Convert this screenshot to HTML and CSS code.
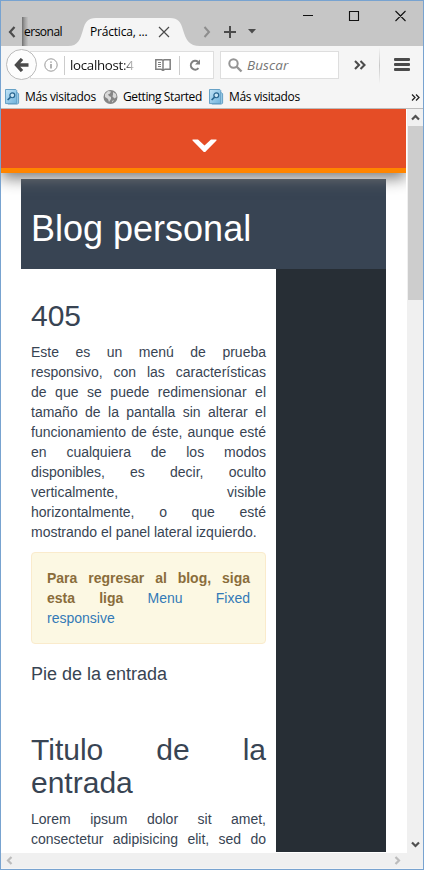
FILE: index.html
```html
<!DOCTYPE html>
<html lang="es">
<head>
<meta charset="utf-8">
<title>Práctica</title>
<link rel="stylesheet" href="styles.css">
</head>
<body>
<svg width="0" height="0" class="defs">
  <defs>
    <linearGradient id="blue" x1="0" y1="0" x2="1" y2="1"><stop offset="0" stop-color="#c4e5f7"/><stop offset="1" stop-color="#6fb2dc"/></linearGradient>
    <symbol id="folder" viewBox="0 0 16 17">
      <path d="M11 4h2.500l1 1v10l-1 1H3" fill="#a5d3ee" stroke="#5f9cc2"/>
      <path d="M.5 .5h11l1 1v14H.5z" fill="url(#blue)" stroke="#5f9cc2"/>
      <circle cx="7.800" cy="6.700" r="2.600" fill="#c9e6f6" stroke="#28658f" stroke-width="1.300"/>
      <path d="M6 8.600l-3.200 3.100" stroke="#28658f" stroke-width="1.700"/>
    </symbol>
  </defs>
</svg>
<div class="window">
  <div class="tabstrip">
    <svg class="tab-prev" width="8" height="12" viewBox="0 0 8 12"><path d="M6.500 1L2 6l4.500 5" fill="none" stroke="#4b4b4b" stroke-width="2.200"/></svg>
    <div class="tab-edge"></div>
    <div class="tab-old">ersonal</div>
    <div class="tab-active">
      <svg class="tab-shape" width="132" height="28" viewBox="0 0 132 28"><path d="M0 28C10 28 12 22 15 12C17 4 20 0 28 0H102C110 0 113 4 115 12C118 22 121 28 132 28z" fill="#f5f5f5"/></svg>
      <span class="tab-title">Práctica, ...</span>
      <svg class="tab-close" width="12" height="12" viewBox="0 0 12 12"><path d="M1 1l10 10M11 1L1 11" stroke="#4b4b4b" stroke-width="1.200"/></svg>
    </div>
    <svg class="tab-next" width="8" height="12" viewBox="0 0 8 12"><path d="M1.500 1L6 6l-4.500 5" fill="none" stroke="#8d8d8d" stroke-width="2"/></svg>
    <svg class="tab-add" width="12" height="12" viewBox="0 0 12 12"><path d="M6 0v12M0 6h12" stroke="#4b4b4b" stroke-width="2"/></svg>
    <svg class="tab-list" width="8" height="5" viewBox="0 0 8 5"><path d="M0 0h8L4 4.500z" fill="#4b4b4b"/></svg>
    <svg class="win-buttons" width="104" height="12" viewBox="0 0 104 12"><path d="M0 5.500h10M46.500 1.500h9v9h-9zM92.500 1l10 10M102.500 1l-10 10" fill="none" stroke="#111" stroke-width="1.100"/></svg>
  </div>
  <div class="navbar">
    <div class="back"><svg width="15" height="14" viewBox="0 0 15 14"><path d="M8 1L2.500 7L8 13M3 7h11.500" fill="none" stroke="#4b4b4b" stroke-width="3.300"/></svg></div>
    <div class="urlbar">
      <svg class="info" width="14" height="14" viewBox="0 0 14 14"><circle cx="7" cy="7" r="6.200" fill="none" stroke="#999"/><path d="M7 6v4.500M7 3.500v1.300" stroke="#888" stroke-width="1.300"/></svg>
      <i class="sep"></i>
      <span class="url">localhost:4</span>
      <svg class="reader" width="16" height="12" viewBox="0 0 16 12"><path d="M8 1.500L7 .8H.8v9.400H6L8 11.500L10 10.200h5.200V.8H9zM8 2v9" fill="none" stroke="#808080" stroke-width="1.500"/><path d="M3 3.500h3M3 5.500h3M3 7.500h3" stroke="#808080"/></svg>
      <i class="sep"></i>
      <svg class="reload" width="12" height="12" viewBox="0 0 12 12"><path d="M9.500 9.200A4.400 4.400 0 1 1 9 2.800" fill="none" stroke="#808080" stroke-width="2"/><path d="M11 .5v5H6z" fill="#808080"/></svg>
    </div>
    <div class="search">
      <svg width="15" height="15" viewBox="0 0 15 15"><circle cx="5.500" cy="5.500" r="4.200" fill="none" stroke="#959595" stroke-width="2"/><path d="M8.500 8.500l5 5" stroke="#959595" stroke-width="2.400"/></svg>
      <span>Buscar</span>
    </div>
    <svg class="more" width="12" height="10" viewBox="0 0 12 10"><path d="M1 1l4 4-4 4M6.500 1l4 4-4 4" fill="none" stroke="#4b4b4b" stroke-width="2.100"/></svg>
    <i class="menu-sep"></i>
    <div class="burger"><i></i><i></i><i></i></div>
  </div>
  <div class="bookmarks">
    <svg width="15" height="16"><use href="#folder" width="15" height="16"/></svg><span class="most">Más visitados</span>
    <svg width="15" height="16" viewBox="0 0 15 16"><circle cx="7.500" cy="8" r="7" fill="#868686"/><path d="M2 5l3-3 3 .5-1 2-2 1 1 1.500 2 1 0 2-2 3-1-3-3-2zM10 3l3 2 .5 3-2 1.500-2-2 .5-2zM9 12l2-1-1.500 2.500z" fill="#d9d9d9"/></svg><span class="started">Getting Started</span>
    <svg width="15" height="16"><use href="#folder" width="15" height="16"/></svg><span class="most">Más visitados</span>
    <svg class="overflow" width="9" height="7" viewBox="0 0 9 7"><path d="M1 .5l3 3-3 3M5 .5l3 3-3 3" fill="none" stroke="#222" stroke-width="1.300"/></svg>
  </div>
  <div class="viewport">
    <div class="page">
      <div class="topbar"><svg width="26" height="15" viewBox="0 0 26 15"><path d="M1.500 1.500H7L13.500 7.500L20 1.500h5.500V2.500L14.200 14H12.800L1.500 2.500z" fill="#fff"/></svg></div>
      <div class="blog">
        <header><h1>Blog personal</h1></header>
        <div class="columns">
          <main>
            <h2>405</h2>
            <p>Este es un menú de prueba responsivo, con las características de&nbsp;que se puede redimensionar el tamaño de la pantalla sin alterar el funcionamiento de éste, aunque esté en cualquiera de los modos disponibles, es decir, oculto verticalmente, visible horizontalmente, o que esté mostrando el panel lateral izquierdo.</p>
            <div class="alert"><strong>Para regresar al blog, siga esta liga</strong> <a>Menu <span class="link-gap">Fixed</span> responsive</a></div>
            <h4>Pie de la entrada</h4>
            <h2 class="second">Titulo de la entrada</h2>
            <p>Lorem ipsum dolor sit amet, consectetur adipisicing elit, sed do eiusmod tempor</p>
          </main>
          <aside></aside>
        </div>
      </div>
    </div>
    <div class="vscroll">
      <svg width="9" height="7" viewBox="0 0 9 7"><path d="M1 5.500L4.500 2L8 5.500" fill="none" stroke="#505050" stroke-width="2.200"/></svg>
      <div class="thumb"></div>
      <svg width="9" height="7" viewBox="0 0 9 7"><path d="M1 1.500L4.500 5L8 1.500" fill="none" stroke="#505050" stroke-width="2.200"/></svg>
    </div>
  </div>
  <div class="hscroll">
    <svg width="7" height="9" viewBox="0 0 7 9"><path d="M5.500 1L2 4.500L5.500 8" fill="none" stroke="#bcbcbc" stroke-width="2.200"/></svg>
    <svg width="7" height="9" viewBox="0 0 7 9"><path d="M1.500 1L5 4.500L1.500 8" fill="none" stroke="#bcbcbc" stroke-width="2.200"/></svg>
  </div>
</div>
</body>
</html>
```
FILE: styles.css
```css
* { box-sizing: border-box; }
body { margin: 0; font: 14px/20px "Liberation Sans", Arial, sans-serif; overflow: hidden; }
svg { display: block; flex: none; }
.defs { position: absolute; }
i { display: block; flex: none; }
.window { width: 424px; height: 870px; border: 1px solid #78a3d0; display: flex; flex-direction: column; background: #f5f5f5; overflow: hidden; }
.tabstrip, .navbar, .bookmarks { font-family: "Open Sans", "Noto Sans", sans-serif; color: #000; white-space: nowrap; display: flex; flex: none; }

.tabstrip { height: 45px; background: #c6c6c6; font-size: 12px; line-height: 16px; }
.tab-prev { margin: 25px 0 0 7px; }
.tab-edge { width: 8px; height: 29px; margin: 16px 0 0 6px; background: linear-gradient(90deg, #707070, #a0a0a0 35%, #c6c6c600 80%); }
.tab-old { width: 41px; margin: 23px 0 0 -6px; letter-spacing: -.5px; }
.tab-active { width: 132px; height: 28px; margin: 17px 0 0 3px; display: flex; position: relative; }
.tab-shape { position: absolute; left: 0; top: 0; }
.tab-title { position: relative; width: 60px; margin: 6px 0 0 22px; letter-spacing: -.2px; }
.tab-close { position: relative; margin: 8px 0 0 8px; }
.tab-next { margin: 25px 0 0 3px; }
.tab-add { margin: 25px 0 0 13px; }
.tab-list { margin: 28px 0 0 12px; }
.win-buttons { margin: 9px 0 0 47px; }

.navbar { height: 39px; padding-top: 5px; }
.back { width: 31px; height: 31px; margin: -2px 0 0 5px; border: 1px solid #bbb; border-radius: 50%; background: #fdfdfd; display: flex; align-items: center; justify-content: center; z-index: 1; }
.urlbar { width: 184px; height: 28px; margin-left: -7px; padding-left: 13px; border: 1px solid #dedede; background: #fff; display: flex; align-items: center; }
.sep { width: 1px; height: 19px; background: #ccc; }
.info { margin-right: 6px; }
.url { width: 66px; margin: 0 19px 0 5px; font-size: 13.3px; letter-spacing: -.3px; background: linear-gradient(90deg, #111 80%, #ccc 96%, #fff0); background-clip: text; color: transparent; }
.reader { margin-right: 8px; }
.reload { margin-left: 9px; }
.search { width: 119px; height: 28px; margin-left: 6px; padding-left: 7px; border: 1px solid #dedede; background: #fff; display: flex; align-items: center; color: #777; font-size: 13.5px; font-style: italic; }
.search span { margin-left: 4px; letter-spacing: .1px; }
.more { margin: 9px 0 0 15px; }
.menu-sep { width: 1px; height: 37px; margin: -4px 14px 0 13px; background: linear-gradient(#f5f5f5, #c8c8c8 50%, #f5f5f5); }
.burger { display: flex; flex-direction: column; gap: 2px; margin-top: 7px; }
.burger i { width: 16px; height: 3px; border-radius: 1px; background: #4b4b4b; }

.bookmarks { height: 23px; padding: 1px 3px 0 4px; align-items: center; font-size: 12px; }
.bookmarks span { margin-left: 5px; }
.most { width: 78px; letter-spacing: -.34px; }
.started { width: 86px; letter-spacing: -.4px; }
.overflow { margin: 0 0 0 auto; }

.viewport { height: 745px; border-top: 1px solid #bcbcbc; display: flex; flex: none; background: #fff; }
.page { width: 405px; height: 744px; overflow: hidden; position: relative; }
.topbar { position: relative; z-index: 1; height: 64px; background: #e54d26; border-bottom: 5px solid #ff8500; box-shadow: 0 5px 15px #777; display: flex; justify-content: center; padding-top: 29px; }
.blog { width: 365px; height: 673px; margin: 6px 0 0 20px; overflow: hidden; }
header { height: 90px; background: #384453; padding: 30px 10px 0; }
h1, h2, h4, p { margin: 0; font-weight: normal; }
h1 { color: #fff; font-size: 36px; line-height: 39.6px; }
.columns { display: flex; height: 583px; }
main { width: 255px; padding: 30px 10px 0; color: #384453; text-align: justify; }
h2 { font-size: 30px; line-height: 33px; margin-bottom: 10px; }
h2.second { margin-top: 49px; }
.alert { margin: 10px 0 20px; padding: 15px; border: 1px solid #faebcc; border-radius: 4px; background: #fcf8e3; color: #8a6d3b; }
.alert a { color: #337ab7; }
.link-gap { margin-left: 9px; }
h4 { font-size: 18px; line-height: 20px; }
aside { flex: 1; background: #272e35; }
.vscroll { width: 16px; margin-left: 1px; background: #f0f0f0; display: flex; flex-direction: column; align-items: center; padding: 5px 0; }
.thumb { width: 15px; height: 174px; margin: 5px 0 auto; background: #cdcdcd; flex: none; }
.hscroll { height: 15px; background: #f0f0f0; display: flex; justify-content: space-between; padding: 3px 22px 0 5px; }
```
